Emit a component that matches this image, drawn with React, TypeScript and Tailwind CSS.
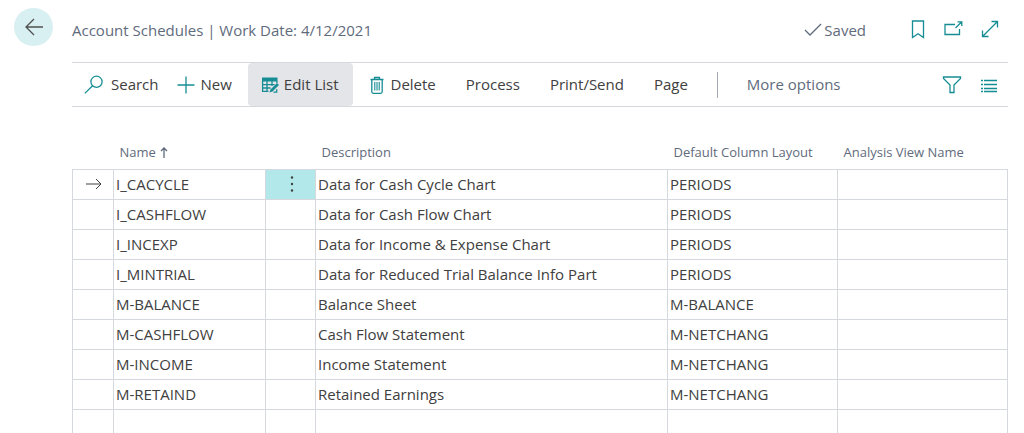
import type { ReactNode } from 'react'

type Schedule = {
  name: string
  description: string
  layout: string
}

const schedules: Schedule[] = [
  { name: 'I_CACYCLE', description: 'Data for Cash Cycle Chart', layout: 'PERIODS' },
  { name: 'I_CASHFLOW', description: 'Data for Cash Flow Chart', layout: 'PERIODS' },
  { name: 'I_INCEXP', description: 'Data for Income & Expense Chart', layout: 'PERIODS' },
  { name: 'I_MINTRIAL', description: 'Data for Reduced Trial Balance Info Part', layout: 'PERIODS' },
  { name: 'M-BALANCE', description: 'Balance Sheet', layout: 'M-BALANCE' },
  { name: 'M-CASHFLOW', description: 'Cash Flow Statement', layout: 'M-NETCHANG' },
  { name: 'M-INCOME', description: 'Income Statement', layout: 'M-NETCHANG' },
  { name: 'M-RETAIND', description: 'Retained Earnings', layout: 'M-NETCHANG' },
  { name: '', description: '', layout: '' },
]

function Icon({ children }: { children: ReactNode }) {
  return (
    <svg
      width="20"
      height="20"
      viewBox="0 0 20 20"
      fill="none"
      stroke="currentColor"
      strokeWidth="1.3"
      className="shrink-0"
      aria-hidden="true"
    >
      {children}
    </svg>
  )
}

function SearchIcon() {
  return (
    <Icon>
      <circle cx="12.5" cy="6.8" r="5.6" />
      <path d="M8.6 10.8.8 18.4" />
    </Icon>
  )
}

function PlusIcon() {
  return (
    <Icon>
      <path d="M9 1.5v17M.5 10h17" />
    </Icon>
  )
}

function EditListIcon() {
  return (
    <Icon>
      <path d="M2 2.5h15.5v4H2z" fill="currentColor" stroke="none" />
      <path d="M2.6 6v10.4h5.9M2.6 9.7h12M2.6 13h8M7 6v10.4M12 6v5M16.9 6v2" />
      <path d="m10.500 14.500 6.500-6.500 2 2-6.500 6.500-3 1z" fill="currentColor" stroke="none" />
      <path d="M13.500 17.200h3.200v-3" />
    </Icon>
  )
}

function TrashIcon() {
  return (
    <Icon>
      <path d="M3.500 4.500h13M7.500 4.500v-2h5v2M4.800 4.500v12.300a1.500 1.500 0 0 0 1.500 1.500h7.400a1.500 1.500 0 0 0 1.500-1.500V4.500" />
      <path d="M7.800 7v8.500M10 7v8.500M12.200 7v8.500" strokeWidth="1.1" />
    </Icon>
  )
}

function ToolButton({ icon, label, className = '' }: { icon?: ReactNode; label: string; className?: string }) {
  return (
    <button className={`flex h-full items-center whitespace-nowrap ${className}`}>
      {icon && <span className="text-[#168d94]">{icon}</span>}
      {label}
    </button>
  )
}

function IconButton({ label, children }: { label: string; children: ReactNode }) {
  return (
    <button aria-label={label} className="text-[#168d94]">
      {children}
    </button>
  )
}

export default function App() {
  return (
    <div className="flex bg-white font-['Open_Sans',sans-serif] text-[15px] text-[#404040]">
      <div className="w-[72px] shrink-0 pt-2 pl-[14px]">
        <button
          aria-label="Back"
          className="flex h-[38px] w-[39px] items-center justify-center rounded-full bg-[#d9f0f2] text-[#505050]"
        >
          <Icon>
            <path d="M19 10H2M10 2 2 10l8 8" />
          </Icon>
        </button>
      </div>

      <main className="min-w-0 flex-1 pr-4">
        <header className="flex h-[62px] items-center pb-[2px] text-[#5f6b7c]">
          <h1>Account Schedules | Work Date: 4/12/2021</h1>
          <div className="ml-auto flex items-center">
            <Icon>
              <path d="m1 10 5 5L17 4" />
            </Icon>
            <span>Saved</span>
          </div>
          <div className="ml-[42px] flex gap-4 pr-2">
            <IconButton label="Bookmark">
              <Icon>
                <path d="M4.500 1h11v16.500L10 13.800l-5.500 3.700z" />
              </Icon>
            </IconButton>
            <IconButton label="Open in new window">
              <Icon>
                <path d="M11 4.500H1v10h14.500V9M11.500 8l6-6M13.500 1.800h4.300v4.200" />
              </Icon>
            </IconButton>
            <IconButton label="Expand">
              <Icon>
                <path d="M2.500 16.500 17.500 1.500M11.500 1.500h6v6M2.500 10.500v6h6" />
              </Icon>
            </IconButton>
          </div>
        </header>

        <div className="flex h-[45px] items-center border-y border-[#d5d8dd]">
          <ToolButton icon={<SearchIcon />} label="Search" className="gap-[7px] pl-3" />
          <ToolButton icon={<PlusIcon />} label="New" className="ml-[18px] gap-1" />
          <ToolButton
            icon={<EditListIcon />}
            label="Edit List"
            className="ml-4 gap-1 rounded-sm bg-[#e4e5e8] pr-[14px] pl-3"
          />
          <ToolButton icon={<TrashIcon />} label="Delete" className="ml-[14px] gap-1" />
          <ToolButton label="Process" className="ml-[30px]" />
          <ToolButton label="Print/Send" className="ml-[30px]" />
          <ToolButton label="Page" className="ml-[30px]" />
          <div className="mx-[29px] h-[26px] border-l border-[#a3a9b2]" />
          <ToolButton label="More options" className="text-[#5f6b7c]" />
          <div className="ml-auto flex gap-4 pr-[10px]">
            <IconButton label="Filter">
              <Icon>
                <path d="M1.500 2h17v1.500L12 10v7.500H8V10L1.500 3.500z" />
              </Icon>
            </IconButton>
            <IconButton label="Show as list">
              <Icon>
                <path d="M3 5.500h2M6 5.500h13M3 9.500h2M6 9.500h13M3 13.500h2M6 13.500h13M3 16.500h2M6 16.500h13" />
              </Icon>
            </IconButton>
          </div>
        </div>

        <table className="w-full table-fixed border-collapse">
          <colgroup>
            <col className="w-[41px]" />
            <col className="w-[152px]" />
            <col className="w-[50px]" />
            <col />
            <col className="w-[170px]" />
            <col className="w-[170px]" />
          </colgroup>
          <thead>
            <tr className="h-[62px] text-left text-[13px] whitespace-nowrap text-[#5f6b7c] [&>th]:pt-[30px] [&>th]:pl-[6px] [&>th]:font-normal">
              <th />
              <th>
                <span className="flex items-center gap-1">
                  Name
                  <svg width="8" height="12" viewBox="0 0 8 12" fill="none" stroke="currentColor" strokeWidth="1.3" aria-hidden="true">
                    <path d="M4 11V1M1 4l3-3 3 3" />
                  </svg>
                </span>
              </th>
              <th />
              <th>Description</th>
              <th>Default Column Layout</th>
              <th>Analysis View Name</th>
            </tr>
          </thead>
          <tbody>
            {schedules.map((row, i) => (
              <tr key={i} className="h-[30px] [&>td]:border [&>td]:border-[#d5d8dd] [&>td]:p-0 [&>td]:pl-[2px]">
                <td>
                  {i === 0 && (
                    <svg width="16" height="12" viewBox="0 0 16 12" fill="none" stroke="currentColor" className="mx-auto" aria-hidden="true">
                      <path d="M0 6h15M10 1l5 5-5 5" />
                    </svg>
                  )}
                </td>
                <td>{row.name}</td>
                {i === 0 ? (
                  <td className="bg-[#b2e8ea]">
                    <button aria-label="Row actions" className="flex w-full justify-center">
                      <svg width="4" height="18" viewBox="0 0 4 18" fill="currentColor" aria-hidden="true">
                        <circle cx="2" cy="2.5" r="1.2" />
                        <circle cx="2" cy="9" r="1.2" />
                        <circle cx="2" cy="15.5" r="1.2" />
                      </svg>
                    </button>
                  </td>
                ) : (
                  <td />
                )}
                <td>{row.description}</td>
                <td>{row.layout}</td>
                <td />
              </tr>
            ))}
          </tbody>
        </table>
      </main>
    </div>
  )
}
